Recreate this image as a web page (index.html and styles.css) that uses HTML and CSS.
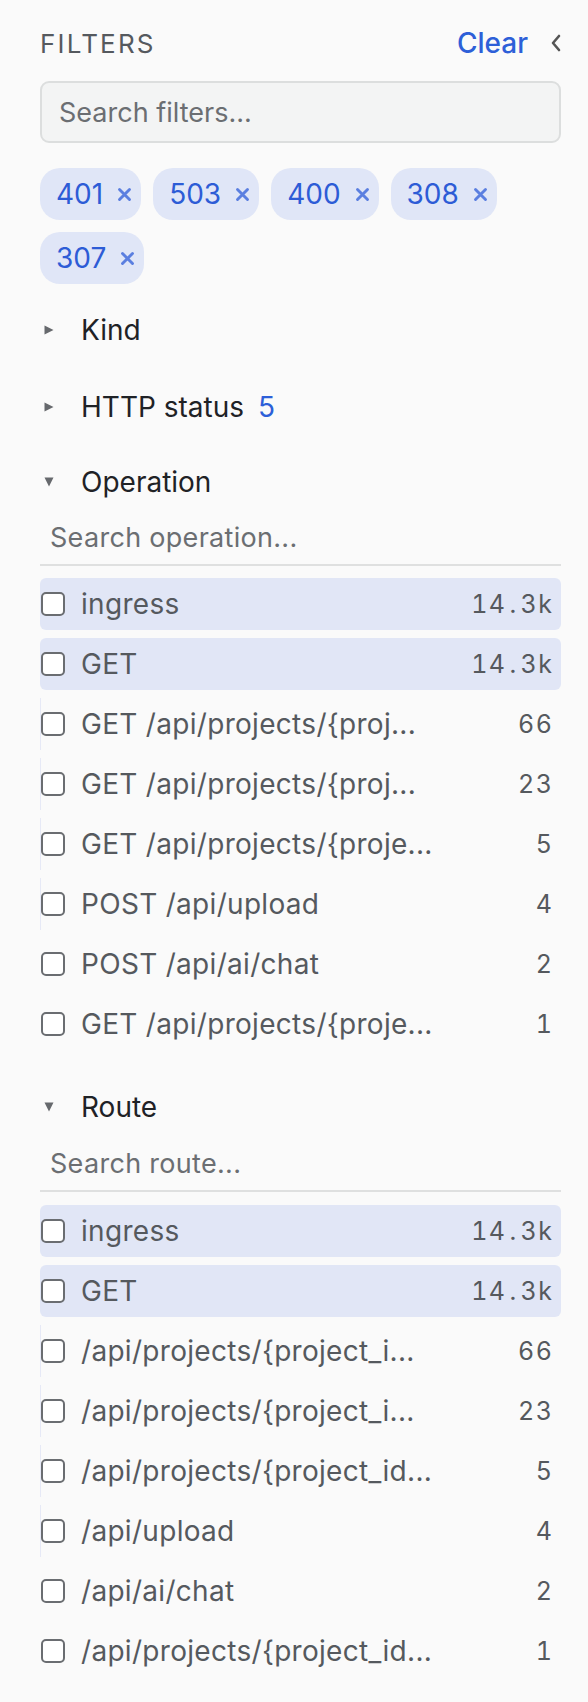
FILE: index.html
```html
<!DOCTYPE html>
<html>
<head>
<meta charset="utf-8">
<link rel="stylesheet" href="styles.css">
</head>
<body>
<aside class="panel">
  <div class="head">
    <span class="title">FILTERS</span>
    <span class="head-actions">
      <span class="clear">Clear</span>
      <svg class="collapse" width="12" height="18" viewBox="0 0 12 18"><polyline points="9,2 3,9 9,16" fill="none" stroke="#555" stroke-width="2.6" stroke-linecap="round" stroke-linejoin="round"/></svg>
    </span>
  </div>
  <div class="search-box">Search filters...</div>
  <div class="chips">
    <span class="chip">401<svg class="x" viewBox="0 0 12 12"><path d="M2 2L10 10M10 2L2 10"/></svg></span>
    <span class="chip">503<svg class="x" viewBox="0 0 12 12"><path d="M2 2L10 10M10 2L2 10"/></svg></span>
    <span class="chip">400<svg class="x" viewBox="0 0 12 12"><path d="M2 2L10 10M10 2L2 10"/></svg></span>
    <span class="chip">308<svg class="x" viewBox="0 0 12 12"><path d="M2 2L10 10M10 2L2 10"/></svg></span>
    <span class="chip">307<svg class="x" viewBox="0 0 12 12"><path d="M2 2L10 10M10 2L2 10"/></svg></span>
  </div>

  <section class="group">
    <div class="group-head"><svg class="tri" viewBox="0 0 10 10"><path d="M0.5 0.5L9.5 5L0.5 9.5Z"/></svg><span>Kind</span></div>
  </section>

  <section class="group">
    <div class="group-head"><svg class="tri" viewBox="0 0 10 10"><path d="M0.5 0.5L9.5 5L0.5 9.5Z"/></svg><span>HTTP status</span><span class="count-badge">5</span></div>
  </section>

  <section class="group open op">
    <div class="group-head"><svg class="tri" viewBox="0 0 10 10"><path d="M0.5 0.5L9.5 0.5L5 9.5Z"/></svg><span>Operation</span></div>
    <div class="group-search">Search operation...</div>
    <ul class="options">
      <li class="opt"><span class="bar" style="width:100%"></span><span class="box"></span><span class="label">ingress</span><span class="num">14<span class="dot">.</span>3k</span></li>
      <li class="opt"><span class="bar" style="width:100%"></span><span class="box"></span><span class="label">GET</span><span class="num">14<span class="dot">.</span>3k</span></li>
      <li class="opt"><span class="bar faint" style="width:1px"></span><span class="box"></span><span class="label">GET /api/projects/{proj...</span><span class="num">66</span></li>
      <li class="opt"><span class="bar faint" style="width:1px"></span><span class="box"></span><span class="label">GET /api/projects/{proj...</span><span class="num">23</span></li>
      <li class="opt"><span class="bar faint" style="width:1px"></span><span class="box"></span><span class="label">GET /api/projects/{proje...</span><span class="num">5</span></li>
      <li class="opt"><span class="bar faint" style="width:1px"></span><span class="box"></span><span class="label">POST /api/upload</span><span class="num">4</span></li>
      <li class="opt"><span class="box"></span><span class="label">POST /api/ai/chat</span><span class="num">2</span></li>
      <li class="opt"><span class="box"></span><span class="label">GET /api/projects/{proje...</span><span class="num">1</span></li>
    </ul>
  </section>

  <section class="group open route">
    <div class="group-head"><svg class="tri" viewBox="0 0 10 10"><path d="M0.5 0.5L9.5 0.5L5 9.5Z"/></svg><span>Route</span></div>
    <div class="group-search">Search route...</div>
    <ul class="options">
      <li class="opt"><span class="bar" style="width:100%"></span><span class="box"></span><span class="label">ingress</span><span class="num">14<span class="dot">.</span>3k</span></li>
      <li class="opt"><span class="bar" style="width:100%"></span><span class="box"></span><span class="label">GET</span><span class="num">14<span class="dot">.</span>3k</span></li>
      <li class="opt"><span class="bar faint" style="width:1px"></span><span class="box"></span><span class="label">/api/projects/{project_i...</span><span class="num">66</span></li>
      <li class="opt"><span class="bar faint" style="width:1px"></span><span class="box"></span><span class="label">/api/projects/{project_i...</span><span class="num">23</span></li>
      <li class="opt"><span class="bar faint" style="width:1px"></span><span class="box"></span><span class="label">/api/projects/{project_id...</span><span class="num">5</span></li>
      <li class="opt"><span class="bar faint" style="width:1px"></span><span class="box"></span><span class="label">/api/upload</span><span class="num">4</span></li>
      <li class="opt"><span class="box"></span><span class="label">/api/ai/chat</span><span class="num">2</span></li>
      <li class="opt"><span class="box"></span><span class="label">/api/projects/{project_id...</span><span class="num">1</span></li>
    </ul>
  </section>
</aside>
</body>
</html>
```

FILE: styles.css
```css
* { box-sizing: border-box; }
html, body { margin: 0; padding: 0; background: #fafafa; }
body { font-family: Inter, "Noto Sans", sans-serif; color: #1f2226; }

.panel {
  width: 588px;
  padding: 23px 27px 20px 40px;
}

.head {
  display: flex;
  align-items: center;
  justify-content: space-between;
  height: 40px;
}
.title {
  font-size: 26px;
  letter-spacing: 2.2px;
  color: #55595e;
  font-weight: 400;
}
.head-actions { display: flex; align-items: center; gap: 22px; }
.clear { font-size: 28px; color: #2d5fd8; font-weight: 450; }
.collapse { display: block; margin-right: -1px; }

.search-box {
  margin-top: 18px;
  height: 62px;
  border: 2px solid #dcdede;
  border-radius: 9px;
  background: #f3f4f4;
  padding: 0 17px;
  display: flex;
  align-items: center;
  font-size: 27px;
  color: #6b6e72;
}

.chips {
  margin-top: 25px;
  display: flex;
  flex-wrap: wrap;
  gap: 12px 12px;
}
.chip {
  height: 52px;
  border-radius: 20px;
  background: #e0e6f7;
  color: #2d5cd6;
  font-size: 28px;
  display: inline-flex;
  align-items: center;
  padding: 0 9px 0 16px;
  gap: 14px;
}
.chip .x {
  width: 15px;
  height: 15px;
  stroke: #5b7fe0;
  stroke-width: 2.3;
  stroke-linecap: round;
  fill: none;
}

.group { margin-top: 24px; }
.group + .group { margin-top: 33px; }
.group.op { margin-top: 31px; }
.group.route { margin-top: 35px; }
.group-head {
  height: 44px;
  display: flex;
  align-items: center;
  font-size: 28px;
  color: #1f2226;
}
.tri {
  width: 10px;
  height: 10px;
  fill: #66696d;
  margin-left: 4px;
  margin-right: 27px;
}
.count-badge { color: #2d5fd8; margin-left: 14px; }

.group-search {
  height: 56px;
  border-bottom: 2px solid #dfe0e0;
  padding-left: 10px;
  display: flex;
  align-items: center;
  font-size: 27px;
  letter-spacing: 0.3px;
  color: #6b6e72;
  margin-top: 6px;
}
.route .group-search { margin-top: 7px; }

.options {
  list-style: none;
  margin: 12px 0 0;
  padding: 0;
  display: flex;
  flex-direction: column;
  gap: 8px;
}
.route .options { margin-top: 13px; }
.opt {
  position: relative;
  height: 52px;
  display: flex;
  align-items: center;
  padding: 0 9px 0 1px;
  font-size: 28px;
  color: #55595e;
}
.bar {
  position: absolute;
  left: 0; top: 0; bottom: 0;
  background: #e1e6f6;
  border-radius: 6px;
}
.bar.faint { background: #e6e9f6; border-radius: 0; }
.box {
  position: relative;
  width: 24px;
  height: 24px;
  border: 2px solid #6a6d71;
  border-radius: 5px;
  background: #fff;
  flex: none;
}
.label {
  position: relative;
  margin-left: 16px;
  flex: 1;
  white-space: nowrap;
  letter-spacing: 0.3px;
}
.num {
  position: relative;
  font-size: 25px;
  font-variant-numeric: tabular-nums;
  letter-spacing: 1.5px;
  margin-right: -1.5px;
  color: #55595e;
}
.num .dot {
  display: inline-block;
  width: 14px;
  text-align: center;
}
```
